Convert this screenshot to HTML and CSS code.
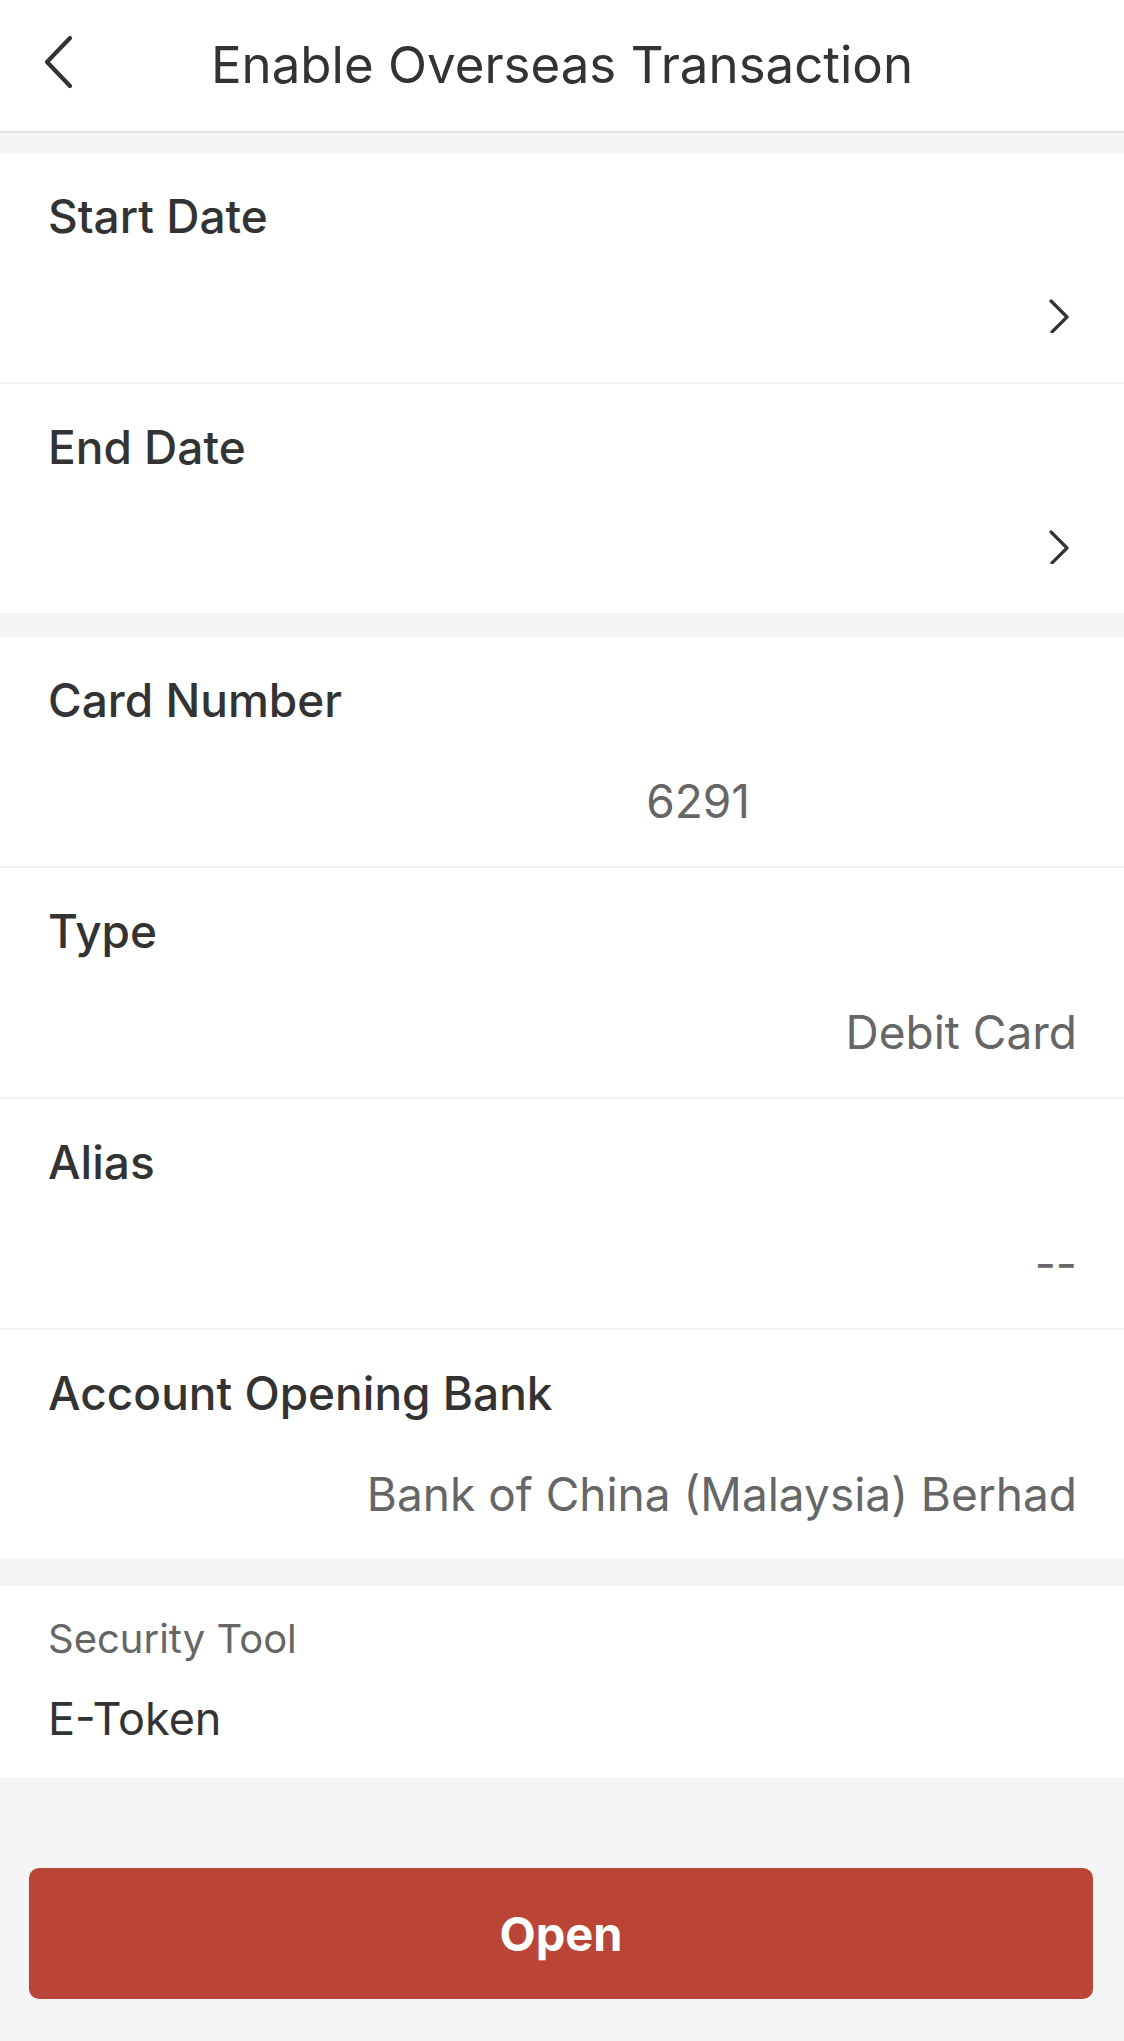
FILE: index.html
```html
<!DOCTYPE html>
<html lang="en">
<head>
<meta charset="utf-8">
<title>Enable Overseas Transaction</title>
<link rel="stylesheet" href="styles.css">
</head>
<body>
<div class="page">
  <header class="topbar">
    <div class="back">
      <svg width="40" height="60" viewBox="0 0 40 60" aria-hidden="true"><polyline points="30,6 7,30 30,54" fill="none" stroke="#333" stroke-width="4.2" stroke-linecap="round" stroke-linejoin="round"/></svg>
    </div>
    <h1 class="title">Enable Overseas Transaction</h1>
    <div class="spacer"></div>
  </header>

  <section class="group">
    <div class="row">
      <div class="label">Start Date</div>
      <div class="value"><span class="blank"></span><svg class="chev" width="20" height="34" viewBox="0 0 20 34" aria-hidden="true"><polyline points="2,2 18,18 3,33" fill="none" stroke="#333" stroke-width="3.2" stroke-linecap="round" stroke-linejoin="round"/></svg></div>
    </div>
    <div class="row">
      <div class="label">End Date</div>
      <div class="value"><span class="blank"></span><svg class="chev" width="20" height="34" viewBox="0 0 20 34" aria-hidden="true"><polyline points="2,2 18,18 3,33" fill="none" stroke="#333" stroke-width="3.2" stroke-linecap="round" stroke-linejoin="round"/></svg></div>
    </div>
  </section>

  <section class="group group-2">
    <div class="row">
      <div class="label">Card Number</div>
      <div class="value"><span class="card-num">6291</span></div>
    </div>
    <div class="row">
      <div class="label">Type</div>
      <div class="value">Debit Card</div>
    </div>
    <div class="row">
      <div class="label">Alias</div>
      <div class="value">--</div>
    </div>
    <div class="row">
      <div class="label">Account Opening Bank</div>
      <div class="value">Bank of China (Malaysia) Berhad</div>
    </div>
  </section>

  <section class="security">
    <div class="sec-label">Security Tool</div>
    <div class="sec-value">E-Token</div>
  </section>

  <div class="actions">
    <button class="open-btn" type="button">Open</button>
  </div>
</div>
</body>
</html>
```

FILE: styles.css
```css
* { box-sizing: border-box; }

html, body {
  margin: 0;
  padding: 0;
  background: #f5f5f5;
}

body {
  font-family: "Inter", "Noto Sans", sans-serif;
  color: #333;
}

.page {
  width: 1124px;
  min-height: 2041px;
  background: #f5f5f5;
  display: flex;
  flex-direction: column;
}

.topbar {
  height: 133px;
  background: #fff;
  border-bottom: 2px solid #e2e2e2;
  display: grid;
  grid-template-columns: 1fr auto 1fr;
  align-items: center;
}

.back {
  padding-left: 40px;
  display: flex;
  align-items: center;
  height: 60px;
  margin-top: -8px;
}

.title {
  margin: 0;
  font-size: 51px;
  font-weight: 400;
  line-height: 60px;
  color: #333;
  letter-spacing: 0;
  margin-top: -2px;
}

.group {
  margin-top: 20px;
  background: #fff;
  display: flex;
  flex-direction: column;
}

.group-2 {
  margin-top: 24px;
}

.row {
  height: 231px;
  padding: 35px 47px 0 48px;
  border-bottom: 2px solid #f2f2f2;
  display: flex;
  flex-direction: column;
}

.row:last-child {
  height: 229px;
  border-bottom: none;
}

.label {
  font-size: 46px;
  font-weight: 500;
  line-height: 56px;
  color: #333;
}

.value {
  margin-top: 45px;
  height: 56px;
  font-size: 46px;
  font-weight: 400;
  line-height: 56px;
  color: #666;
  display: flex;
  justify-content: flex-end;
  align-items: center;
}

.card-num {
  margin-right: 327px;
}

.chev {
  margin-right: 8px;
  margin-top: -2px;
}

.security {
  margin-top: 27px;
  height: 192px;
  background: #fff;
  padding: 28px 48px 0 48px;
  display: flex;
  flex-direction: column;
}

.sec-label {
  font-size: 40px;
  line-height: 50px;
  color: #666;
}

.sec-value {
  margin-top: 28px;
  font-size: 45px;
  line-height: 54px;
  color: #333;
}

.actions {
  padding: 90px 31px 0 29px;
}

.open-btn {
  width: 100%;
  height: 131px;
  border: none;
  border-radius: 10px;
  background: #ba4537;
  color: #fff;
  font-family: "Inter", "Noto Sans", sans-serif;
  font-size: 47px;
  font-weight: 700;
  display: flex;
  align-items: center;
  justify-content: center;
}
```
